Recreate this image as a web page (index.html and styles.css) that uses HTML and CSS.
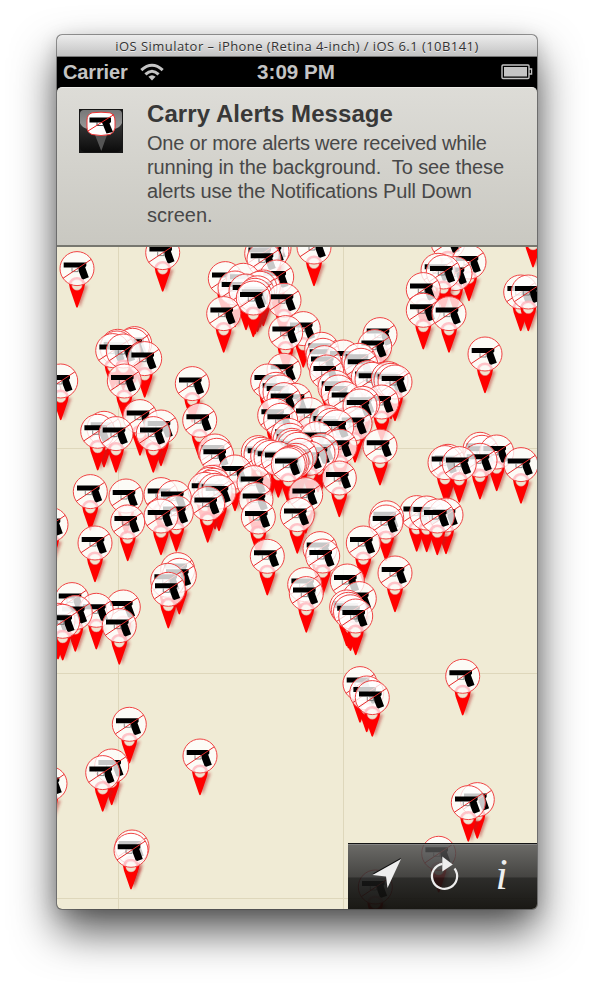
FILE: index.html
```
<!DOCTYPE html>
<html lang="en">
<head>
<meta charset="utf-8">
<title>iOS Simulator</title>
<link rel="stylesheet" href="styles.css">
</head>
<body>
<main class="window">
  <header class="titlebar">iOS Simulator – iPhone (Retina 4-inch) / iOS 6.1 (10B141)</header>
  <div class="status">
    <div class="carrier"><span class="carrier-name">Carrier</span>
      <svg class="wifi" width="24" height="18" viewBox="0 0 24 18"><g fill="none" stroke="#c4c4c4" stroke-width="3"><path d="M1.3 7.2Q12-2.7 22.7 7.2"/><path d="M5.4 11.4Q12 5.1 18.6 11.4"/></g><path d="M8.4 13.8Q12 10.7 15.6 13.8L12 17.6Z" fill="#c4c4c4"/></svg>
    </div>
    <div class="clock">3:09 PM</div>
    <svg class="battery" width="32" height="16" viewBox="0 0 32 16"><rect x="1" y="1" width="27" height="13.5" rx="1" fill="none" stroke="#c4c4c4" stroke-width="1.4"/><rect x="3" y="3" width="23" height="9.5" fill="#c4c4c4"/><path d="M28 5h2.6v5H28" fill="none" stroke="#c4c4c4" stroke-width="1.3"/></svg>
  </div>
  <div class="banner-wrap">
    <section class="banner">
      <svg class="app-icon" width="44" height="44" viewBox="0 0 44 44">
        <defs><linearGradient id="app" x2="0" y2="1"><stop offset="0" stop-color="#555"/><stop offset=".4" stop-color="#303030"/><stop offset="1" stop-color="#0b0b0b"/></linearGradient><linearGradient id="gloss" x2="0" y2="1"><stop offset="0" stop-color="#777"/><stop offset="1" stop-color="#999"/></linearGradient></defs>
        <rect width="44" height="44" fill="#171717"/><rect x="1" y="1" width="42" height="42" rx="5" fill="url(#app)"/>
        <path d="M1 5Q1 1 5 1H39Q43 1 43 5V14Q41 19 35 20H9Q3 19 1 14Z" fill="url(#gloss)"/>
        <path d="M16 26L22.3 42L28 26Z" fill="#555"/>
        <path d="M13 3.8Q22 2.6 31 3.8Q36 5.5 36 12V19Q35 24 31 25.5Q22 27.5 13 25.5Q8 23.5 8 18V11Q8 5.5 13 3.8Z" fill="#fff" stroke="#e33"/>
        <path d="M10.5 8.5H32V13L30.5 14.5L34 23L27.5 24.5L24 16L23 13.5H10.5Z"/><path d="M18 13V16.5H24" fill="none" stroke="#444"/><path d="M9 22L35 5.5" stroke="#e22"/>
      </svg>
      <div class="message">
        <h1>Carry Alerts Message</h1>
        <p><span class="l1">One or more alerts were received while</span><br><span class="l2">running in the background.&nbsp; To see these</span><br><span class="l3">alerts use the Notifications Pull Down</span><br>screen.</p>
      </div>
    </section>
  </div>
  <section class="map">
    <svg id="pins" class="pins" width="480" height="662" viewBox="57 247 480 662">
      <defs>
        <filter id="soft" x="-1" y="-.5" width="3" height="2"><feGaussianBlur stdDeviation="1.5"/></filter>
        <g id="pin">
          <path d="M-6 17H11L3 39Z" fill="#b32020" opacity=".5" filter="url(#soft)"/>
          <path d="M-8.2 14.5Q0 20 8.2 14.5L7 20.5L.8 38.5Q0 40-.8 38.5L-7 20.5Z" fill="#f00"/>
          <circle cy="16.4" r="5.2" fill="#f0e3cf" stroke="#d88" stroke-width=".5"/>
          <circle r="17" fill="#fff" fill-opacity=".78" stroke="#f04444" stroke-width="1"/>
          <path d="M-7 15.2A7.2 7.2 0 0 1 7 15.2" fill="none" stroke="#ffb5bd" stroke-opacity=".8" stroke-width="2.6"/>
          <path d="M-5-.8V3H1.2V-.8" fill="none" stroke="#555" stroke-width=".7"/>
          <path d="M-13.3-6H9.3V-2.5L8.2-1.3L11.8 8.7L6.2 10.8L4.6 10L2 3.3L1.6-1H-13.3Z"/>
          <path d="M-14 9.7L14.2-9.2" stroke="#e52b2b" stroke-width="1"/>
        </g>
      </defs>
      <path d="M118.5 247V909M343.5 247V909M57 448.5H537M57 673.5H537M57 898.5H537" stroke="#ded7bb" stroke-width="1"/>
    </svg>
    <nav class="toolbar">
      <svg width="189" height="65" viewBox="348 844 189 65">
        <g fill="#111" transform="translate(0 -1.3)"><path d="M401 859L372.5 875L386 876.5L387.5 888Z"/></g>
        <path d="M401 859L372.5 875L386 876.5L387.5 888Z" fill="#eee"/>
        <path d="M442.5 863.8A12.6 12.6 0 1 0 454.5 868.5" fill="none" stroke="#eee" stroke-width="2.2"/><path d="M442.3 856.5L452.8 864.6L442.3 871.5Z" fill="#eee"/>
        <text class="info" x="495.5" y="889">i</text>
      </svg>
    </nav>
  </section>
</main>
<script src="script.js"></script>
</body>
</html>
```
FILE: styles.css
```
* { box-sizing: border-box; }
body { margin: 0; height: 988px; overflow: hidden; padding: 35px 0 0 57px; background: #fff; font-family: "Liberation Sans", sans-serif; }
.window { width: 480px; height: 874px; border-radius: 5px; box-shadow: 0 0 0 1px rgba(70,70,70,.55), 0 22px 44px rgba(0,0,0,.68), 0 4px 18px rgba(0,0,0,.15); background: #000; }
.titlebar { height: 22px; border-radius: 5px 5px 0 0; border-bottom: 1px solid #777; background: linear-gradient(#ececec, #c3c3c3); color: #333; text-align: center; font: 13px/23px "Open Sans", sans-serif; letter-spacing: .44px; white-space: pre; text-shadow: 0 1px #eee; }
.status { height: 30px; display: grid; grid-template-columns: 1fr auto 1fr; align-items: center; padding: 0 4px 0 6px; background: #000; color: #c4c4c4; font-size: 20px; font-weight: bold; }
.carrier { display: flex; align-items: center; gap: 12px; }
.carrier-name { letter-spacing: -.15px; }
.clock { font-size: 20.6px; position: relative; left: -2px; }
.battery { justify-self: end; }
.banner-wrap { height: 160px; background: #000; }
.banner { height: 160px; display: flex; gap: 24px; padding: 21px 20px 0 22px; border-radius: 5px 5px 0 0; border-top: 1px solid #eeede9; border-bottom: 2px solid #77776f; background: linear-gradient(#dddcd7, #c9c8c1); color: #484848; }
.app-icon { flex: none; }
.message { margin-top: -9px; white-space: nowrap; }
h1 { margin: 0; color: #383838; font-size: 24px; line-height: 28px; letter-spacing: .07px; }
p { margin: 3px 0 0; font-size: 20px; line-height: 24px; }
.l1 { letter-spacing: -.22px; }
.l2 { letter-spacing: -.1px; }
.l3 { letter-spacing: -.14px; }
.map { position: relative; height: 662px; overflow: hidden; border-radius: 0 0 5px 5px; background: #f0ebd5; }
.pins { display: block; }
.toolbar { position: absolute; right: 0; bottom: 0; width: 189px; height: 66px; border-top: 1px solid #151515; box-shadow: inset 0 1px #858585; background: linear-gradient(rgba(86,86,86,.86), rgba(45,45,45,.88) 51%, rgba(24,24,24,.9) 52%, rgba(14,13,10,.95)); }
.toolbar svg { display: block; }
.info { font: italic 44px "Liberation Serif", serif; fill: #eee; }
```
FILE: script.js
```
// Pin head centres on the map, back to front.
const pins = [
  [533,228],[448,242],[314,246.7],[274,247.7],[266.7,248],[77,268.3],[162.7,252.3],[272,251],[261.7,253.3],[264,259],
  [469,261.7],[455,273.3],[438,270],[443.3,271.7],[225.3,278.3],[243.3,280],[276.7,276.7],[263.3,286.7],[260,288],[235,287.7],[246,290.7],[257.5,292.5],[255,295],[284,300],[253.3,297.7],
  [423.3,289.3],[423.3,310],[449,313.3],[520.7,291.7],[528.3,291.7],[223.7,313.3],[303.3,328.3],[285.7,332.3],[380,334.3],[374.7,346.3],
  [134.7,343.3],[132.7,345],[117.7,346],[117,347.7],[112.7,350.3],[123.3,350.7],[144.7,358.3],[124.3,380.7],[485,353.7],
  [321.7,349],[323,355],[343.3,356.7],[359,360],[361,365],[324.3,362.3],[326.7,371.7],[284,370],[44,391],[60.7,380.7],[192.3,383.3],
  [267.7,380.7],[368.3,377.3],[372,379],[388.3,378.3],[391,380],[395,381.7],[276,389],[280,391.7],[295,400],[284,399.3],[335,387],[338.3,391.7],[345,398.3],
  [381.7,401.7],[362.7,403],[360,405.7],[140,416.3],[199.7,420],[274.7,415],[309.3,414.3],[280.7,420],[326.7,421.7],[331.7,425],[355,423.3],[336.7,426.7],
  [104,428],[97.7,431],[161,426.7],[116,433.3],[153.3,433.3],[288.3,435],[290,440],[292,445],[316.7,438.3],[340,446],[380,446],[215,450.7],[216.7,455],
  [321.7,450],[318,453],[294,447],[298,449],[258.3,452.3],[261,454],[310,458],[267.7,455.7],[271,457],[300,455],[278.3,458.3],[296,460],[235,471.7],[292,462],[290,463],[288.3,464.3],
  [480,449],[482,452],[496.7,451.7],[480,460],[448,461],[445,462.3],[459.3,463.3],[521,464.3],[305.7,494.3],[339.3,477.7],
  [212,482],[210,484],[214,485],[211,487],[205,489],[254,482.3],[90.3,491.3],[126,495.7],[161,494.3],[174.3,497.3],[215,490],[219,491.7],[256,499.3],[207.7,503.3],
  [176.3,512.3],[161,515.7],[258.3,516.7],[297.3,514.3],[127.7,521.7],[51,524.3],[416.7,512.3],[426.7,512.7],[446,514.7],[437.3,515.7],[386.7,517.5],[386,521.7],
  [95,542.7],[363.3,542.7],[320,548.3],[322.7,555.7],[267.3,556],[177.7,569.3],[179.3,575],[167.7,580],[168.3,589],[395,572.7],[304.7,584.3],[306.3,593.3],[347.3,580.7],[359.3,598.3],
  [346.7,606.7],[348.5,609],[350.5,611.5],[355.7,615.7],[72,599.3],[123.3,606.7],[96.3,610],[75.3,612.3],[58,620],[62.7,621],[119.3,625.3],
  [462.7,676],[360,683.3],[366.7,692.7],[372.3,697.3],[129.3,724],[200,755.7],[111.7,765.7],[102.7,772.3],[50,783.3],[477.3,799.3],[468.3,802.3],[132,846.7],[131,850],[438.7,853],[375.3,886.7]
];
const map = document.getElementById("pins");
for (const [x, y] of pins) {
  const pin = document.createElementNS("http://www.w3.org/2000/svg", "use");
  pin.setAttribute("href", "#pin");
  pin.setAttribute("x", x);
  pin.setAttribute("y", y + 0.3);
  map.appendChild(pin);
}
```
